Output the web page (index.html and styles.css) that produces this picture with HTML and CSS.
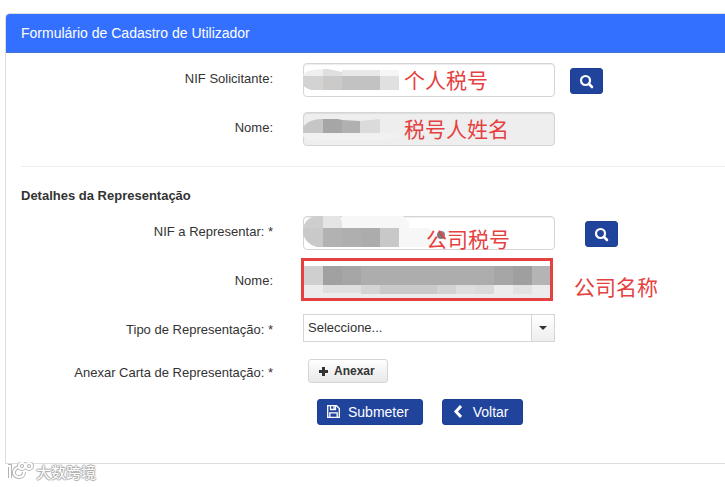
FILE: index.html
```html
<!DOCTYPE html>
<html lang="pt">
<head>
  <meta charset="UTF-8">
  <meta name="viewport" content="width=device-width, initial-scale=1.0">
  <title>Formulário de Cadastro de Utilizador</title>
  <link rel="stylesheet" href="styles.css">
</head>
<body>

<form class="panel">
  <h1 class="panel-heading">Formulário de Cadastro de Utilizador</h1>

  <div class="panel-body">
    <div class="form-row">
      <label class="form-label" for="nifSolicitante">NIF Solicitante:</label>
      <div class="field">
        <input type="text" class="form-control" id="nifSolicitante">
        <svg class="mask" width="252" height="34" aria-hidden="true">
          <path fill="#efefef" d="M0 13C1 8 8 7 20 6V13z"/>
          <path fill="#dfdfdf" d="M20 6H25L39 9V13H20z"/>
          <path fill="#e8e8e8" d="M39 7H77V13H39z"/>
          <path fill="#f5f5f5" d="M77 7H96V13H77z"/>
          <path fill="#d3d3d4" d="M0 13H20V27H8C4 26 3 24 0 23z"/>
          <path fill="#cbcac8" d="M20 13H39V27H20z"/>
          <path fill="#c2c2c2" d="M39 13H77V27H39z"/>
          <path fill="#e0e0e1" d="M77 13H96V27H77z"/>
        </svg>
        <span class="note" lang="zh">个人税号</span>
      </div>
      <div class="action">
        <button type="button" class="btn btn-icon" aria-label="Pesquisar NIF Solicitante">
          <svg width="15" height="15" viewBox="0 0 15 15" aria-hidden="true">
            <circle cx="6.500" cy="6.500" r="4.500" fill="none" stroke="#fff" stroke-width="2.200"/>
            <path d="M10 10L13 13" stroke="#fff" stroke-width="2.600" stroke-linecap="round"/>
          </svg>
        </button>
      </div>
    </div>

    <div class="form-row">
      <label class="form-label" for="nomeSolicitante">Nome:</label>
      <div class="field">
        <input type="text" class="form-control" id="nomeSolicitante" disabled>
        <svg class="mask" width="252" height="34" aria-hidden="true">
          <path fill="#f1f1f1" d="M0 21H96V26L84 28H20C8 29 3 27 0 24z"/>
          <path fill="#c6c6c6" d="M0 21V15C5 9 11 7 20 7V21z"/>
          <path fill="#a6a6a6" d="M20 7H35L39 8V21H20z"/>
          <path fill="#b0b0b0" d="M39 8L57 9V21H39z"/>
          <path fill="#dbdbdb" d="M57 9L77 7V21H57z"/>
        </svg>
        <span class="note" lang="zh">税号人姓名</span>
      </div>
    </div>

    <hr class="divider">
    <h2 class="section-title">Detalhes da Representação</h2>

    <div class="form-row">
      <label class="form-label" for="nifRepresentar">NIF a Representar: *</label>
      <div class="field">
        <input type="text" class="form-control" id="nifRepresentar">
        <svg class="mask" width="252" height="34" aria-hidden="true">
          <path fill="#f7f7f7" d="M39 0H100L106 6V12H126L135 20V26L120 31H39z"/>
          <path fill="#cecece" d="M0 12C2 4 8 0 15 0H20V12z"/>
          <path fill="#e5e5e5" d="M20 0H37L39 6V12H20z"/>
          <path fill="#c9c9c9" d="M0 12H20V31H14C6 29 2 24 0 18z"/>
          <path fill="#b2b2b2" d="M20 12H39V31H20z"/>
          <path fill="#afafaf" d="M39 12H58V31H39z"/>
          <path fill="#acacac" d="M58 12H77V31H58z"/>
          <path fill="#c8c8c8" d="M77 12H96V31H77z"/>
          <circle cx="138" cy="19" r="4" fill="#85777a"/>
        </svg>
        <span class="note note-company" lang="zh">公司税号</span>
      </div>
      <div class="action action-wide">
        <button type="button" class="btn btn-icon" aria-label="Pesquisar NIF a Representar">
          <svg width="15" height="15" viewBox="0 0 15 15" aria-hidden="true">
            <circle cx="6.500" cy="6.500" r="4.500" fill="none" stroke="#fff" stroke-width="2.200"/>
            <path d="M10 10L13 13" stroke="#fff" stroke-width="2.600" stroke-linecap="round"/>
          </svg>
        </button>
      </div>
    </div>

    <div class="form-row">
      <label class="form-label" for="nomeRepresentar">Nome:</label>
      <div class="field">
        <input type="text" class="form-control form-control-plain" id="nomeRepresentar" disabled>
        <svg class="mask highlight" viewBox="0 0 252 43" preserveAspectRatio="none" aria-hidden="true">
          <path fill="#fff" d="M0 0H252V43H0z"/>
          <path fill="#ececec" d="M2 27H250V40H2z"/>
          <path fill="#cfcfcf" d="M2 8H22V27H2z"/>
          <path fill="#a1a1a1" d="M22 8H41V27H22z"/>
          <path fill="#a6a6a6" d="M41 8H60V27H41z"/>
          <path fill="#adadad" d="M60 8H193V27H60z"/>
          <path fill="#a6a6a6" d="M193 8H212V27H193z"/>
          <path fill="#adadad" d="M212 8H231V27H212z"/>
          <path fill="#9f9f9f" d="M212 8H231V27H212z"/>
          <path fill="#b4b4b4" d="M231 8H250V27H231z"/>
          <path fill="#dfdfdf" d="M22 27H60V35H22z"/>
          <path fill="#d4d4d4" d="M60 27H79V36H60z"/>
          <path fill="#c9c9c9" d="M79 27H136V36H79z"/>
          <path fill="#d3d3d3" d="M136 27H155V36H136z"/>
          <path fill="#dedede" d="M155 27H174V36H155z"/>
          <path fill="#dadada" d="M174 27H193V36H174z"/>
          <path fill="#e2e2e2" d="M212 27H231V36H212z"/>
        </svg>
      </div>
      <span class="note-side" lang="zh">公司名称</span>
    </div>

    <div class="form-row">
      <label class="form-label" for="tipo">Tipo de Representação: *</label>
      <div class="field">
        <select class="form-select" id="tipo">
          <option>Seleccione...</option>
        </select>
        <span class="caret" aria-hidden="true"></span>
      </div>
    </div>

    <div class="form-row">
      <label class="form-label" for="anexar">Anexar Carta de Representação: *</label>
      <div class="upload">
        <button type="button" class="btn-upload" id="anexar">
          <svg width="9" height="9" viewBox="0 0 9 9" aria-hidden="true">
            <path d="M3 0H6V3H9V6H6V9H3V6H0V3H3z" fill="#333"/>
          </svg>
          Anexar
        </button>
      </div>
    </div>

    <div class="form-row">
      <div class="buttons">
        <button type="submit" class="btn btn-text">
          <svg width="13" height="13" viewBox="0 0 13 13" fill="none" stroke="#fff" stroke-width="1.300" aria-hidden="true">
            <path d="M.7 .7H9.500L12.300 3.500V12.300H.7z"/>
            <path d="M3.500 .7V4.500H8.500V.7M2.800 12.300V7.800H10.200V12.300"/>
            <path d="M7 1V4"/>
          </svg>
          Submeter
        </button>
        <button type="button" class="btn btn-text">
          <svg width="13" height="13" viewBox="0 0 13 13" aria-hidden="true">
            <path d="M9 1L4 6.500L9 12" fill="none" stroke="#fff" stroke-width="3"/>
          </svg>
          Voltar
        </button>
      </div>
    </div>
  </div>
</form>

<div class="watermark" lang="zh">
  <svg width="28" height="20" viewBox="0 0 28 20" fill="none" aria-hidden="true">
    <g stroke="#b5b5b5" stroke-width="4">
      <path d="M1 4H3V16M13 5C5 6 5 15 12 15C16 15 17 12 17 10"/>
      <circle cx="15" cy="4" r="3"/>
      <circle cx="22" cy="4" r="3"/>
    </g>
    <g stroke="#fff" stroke-width="2">
      <path d="M1 4H3V16M13 5C5 6 5 15 12 15C16 15 17 12 17 10"/>
      <circle cx="15" cy="4" r="3"/>
      <circle cx="22" cy="4" r="3"/>
    </g>
  </svg>
  <span>大数跨境</span>
</div>

</body>
</html>
```
FILE: styles.css
```css
* {
  box-sizing: border-box;
}

body {
  margin: 13px 0 0 5px;
  background-color: #fff;
  color: #333;
  font-family: "Liberation Sans", Arial, "Noto Sans CJK SC", sans-serif;
  font-size: 13px;
  line-height: 18px;
}

.panel {
  border: 1px solid #ddd;
  border-right: none;
  border-radius: 5px 0 0 0;
}

.panel-heading {
  margin: 0;
  padding: 10px 15px;
  border-bottom: 1px solid #4a75cf;
  border-top-left-radius: 4px;
  background-color: #3370ff;
  color: #fff;
  font-size: 14px;
  font-weight: normal;
}

.panel-body {
  padding: 10px 15px 23px;
}

.form-row {
  display: grid;
  grid-template-columns: 1fr 1fr 125px;
  column-gap: 30px;
  margin-bottom: 15px;
}

.form-label {
  padding-top: 7px;
  text-align: right;
}

.field {
  position: relative;
}

.form-control {
  display: block;
  width: 100%;
  height: 34px;
  padding: 6px 12px;
  border: 1px solid #d5d5d5;
  border-radius: 4px;
  background-color: #fff;
  box-shadow: inset 0 1px 1px rgba(0, 0, 0, 0.075);
  font: inherit;
}

.form-control:disabled {
  background-color: #eee;
}

.form-control-plain:disabled {
  border-color: transparent;
  background-color: transparent;
  box-shadow: none;
}

.mask {
  position: absolute;
  top: 0;
  left: 0;
}

.highlight {
  top: -7px;
  left: -2px;
  width: 100%;
  height: 43px;
  outline: 3px solid #e54141;
  outline-offset: -3px;
}

.note,
.note-side {
  color: #e54141;
  font-family: "Noto Sans CJK SC", sans-serif;
  font-size: 21px;
  line-height: 32px;
  white-space: nowrap;
}

.note {
  position: absolute;
  top: 0;
  left: 101px;
}

.note-company {
  top: 6px;
  left: 123px;
}

.note-side {
  margin-left: -11px;
  padding-top: 5px;
  height: 34px;
}

.action {
  margin-left: -15px;
  padding-top: 5px;
}

.action-wide {
  margin-left: 0;
}

.btn {
  display: inline-flex;
  align-items: center;
  justify-content: center;
  height: 26px;
  border: 1px solid #1c3f94;
  border-radius: 3px;
  background-color: #20449c;
  color: #fff;
  font-family: inherit;
  cursor: pointer;
}

.btn-icon {
  width: 33px;
  padding: 0;
}

.btn-text {
  gap: 8px;
  padding: 0 13px 0 9px;
  font-size: 14px;
}

.divider {
  margin: 20px -15px 20px 0;
  border: 0;
  border-top: 1px solid #eee;
}

.section-title {
  margin: 0 0 11px;
  font-size: 13px;
}

.form-select {
  display: block;
  width: 100%;
  height: 28px;
  padding: 0 28px 0 4px;
  border: 1px solid #d5d5d5;
  border-radius: 0;
  background-color: #fff;
  color: #333;
  font: inherit;
  appearance: none;
}

.caret {
  position: absolute;
  top: 1px;
  right: 1px;
  display: flex;
  align-items: center;
  justify-content: center;
  width: 23px;
  height: 26px;
  border-left: 1px solid #d5d5d5;
  background: linear-gradient(#fff, #eee);
  pointer-events: none;
}

.caret::after {
  content: "";
  border: 4px solid transparent;
  border-top-color: #333;
  border-bottom: 0;
}

.upload {
  padding: 2px 5px 0;
  line-height: 24px;
}

.btn-upload {
  display: inline-flex;
  align-items: center;
  gap: 6px;
  height: 24px;
  padding: 0 12px 0 10px;
  border: 1px solid #d5d5d5;
  border-radius: 3px;
  background: linear-gradient(#fff, #e8e8e8);
  color: #333;
  font-family: inherit;
  font-size: 12px;
  font-weight: bold;
  cursor: pointer;
}

.buttons {
  display: flex;
  grid-column: 2;
  gap: 19px;
  padding-left: 14px;
  white-space: nowrap;
}

.watermark {
  position: absolute;
  top: 462px;
  left: 7px;
  display: flex;
  align-items: center;
  gap: 1px;
  color: #fff;
  font-family: "Noto Sans CJK SC", sans-serif;
  font-size: 15px;
  line-height: 20px;
  text-shadow: 1px 0 1px #aaa, -1px 0 1px #aaa, 0 1px 1px #aaa, 0 -1px 1px #aaa;
}
```
